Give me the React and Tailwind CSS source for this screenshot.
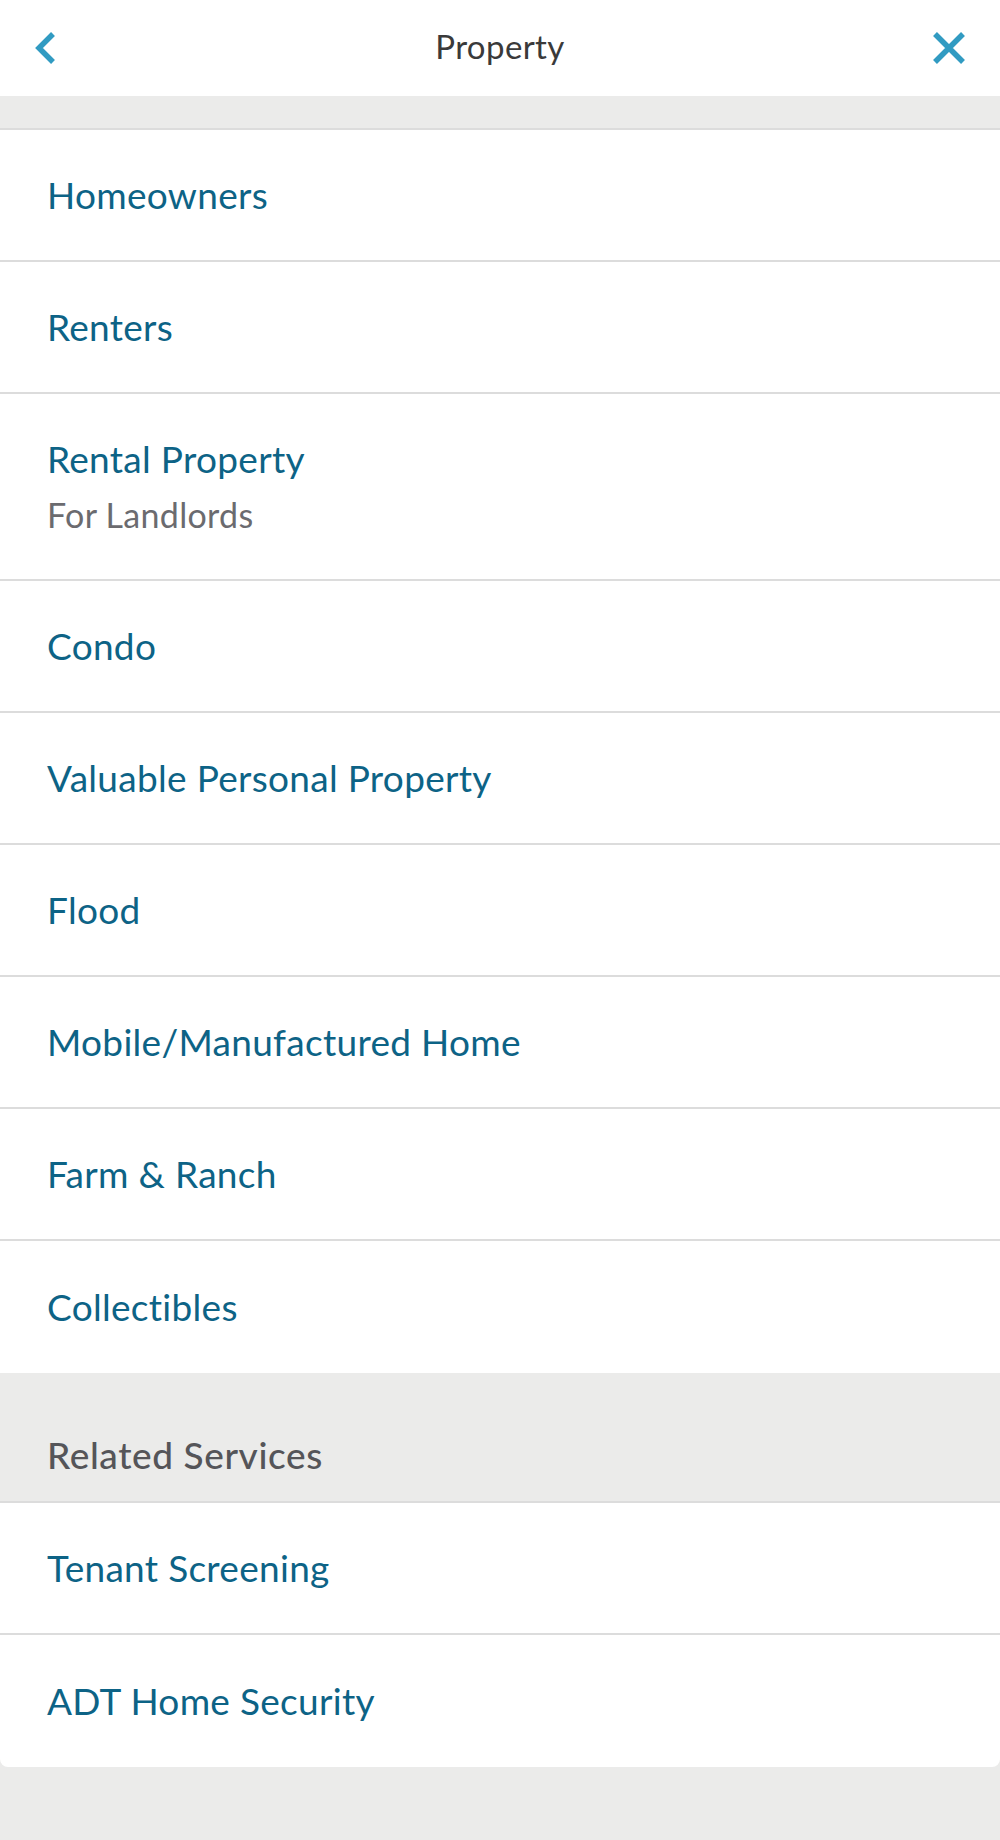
import React from "react";

const items = [
  { title: "Homeowners" },
  { title: "Renters" },
  { title: "Rental Property", sub: "For Landlords" },
  { title: "Condo" },
  { title: "Valuable Personal Property" },
  { title: "Flood" },
  { title: "Mobile/Manufactured Home" },
  { title: "Farm & Ranch" },
  { title: "Collectibles" },
];

const related = [{ title: "Tenant Screening" }, { title: "ADT Home Security" }];

function Row({ item, last }) {
  return (
    <div
      className={
        "flex flex-col justify-center px-[47px] " +
        (item.sub ? "h-[187px] " : "h-[132px] ") +
        (last ? "" : "border-b-2 border-[#dcdcdc]")
      }
    >
      <div className="text-[37px] leading-[44px] tracking-[0.3px] text-[#0d6386]">{item.title}</div>
      {item.sub && (
        <div className="mt-3 text-[34px] leading-[44px] tracking-[0.3px] text-[#6b6b6f]">{item.sub}</div>
      )}
    </div>
  );
}

export default function App() {
  return (
    <div
      className="w-[1000px] min-h-[1840px] bg-[#ebebea]"
      style={{ fontFamily: "Lato, 'Open Sans', sans-serif" }}
    >
      <header className="h-[96px] bg-white flex items-center justify-between px-[34px] pb-[4px]">
        <div className="w-[40px] flex justify-start pt-[4px]">
          <svg width="24" height="34" viewBox="0 0 24 34">
            <path d="M19 3 L5 17 L19 31" fill="none" stroke="#319bc2" strokeWidth="5.5" />
          </svg>
        </div>
        <div className="text-[33px] leading-[40px] tracking-[0.4px] text-[#3a3a3a]">Property</div>
        <div className="w-[40px] flex justify-end pt-[4px]">
          <svg width="34" height="34" viewBox="0 0 34 34">
            <path d="M3 3 L31 31 M31 3 L3 31" fill="none" stroke="#319bc2" strokeWidth="5.5" />
          </svg>
        </div>
      </header>
      <div className="h-[32px]" />
      <div className="bg-white border-t-2 border-[#dcdcdc]">
        {items.map((it, i) => (
          <Row key={it.title} item={it} last={i === items.length - 1} />
        ))}
      </div>
      <div className="h-[130px] flex items-end pb-6 px-[47px] border-b-2 border-[#dcdcdc]">
        <div className="text-[37px] leading-[44px] tracking-[0.6px] font-medium text-[#555559]">Related Services</div>
      </div>
      <div className="bg-white rounded-b-lg">
        {related.map((it, i) => (
          <Row key={it.title} item={it} last={i === related.length - 1} />
        ))}
      </div>
    </div>
  );
}
